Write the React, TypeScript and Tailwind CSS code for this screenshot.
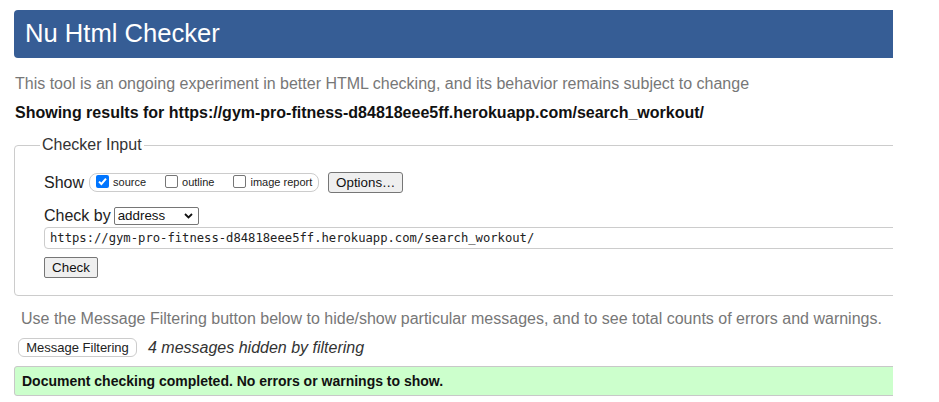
const sans = "font-['Liberation_Sans',Arial,sans-serif]";

function Box({ checked }: { checked?: boolean }) {
  if (checked) {
    return (
      <span className="mt-[1px] flex h-[13px] w-[13px] shrink-0 items-center justify-center self-start rounded-[2px] bg-[#0075ff]">
        <svg width="11" height="11" viewBox="0 0 11 11">
          <path d="M2 5.6 L4.4 8 L9 2.6" fill="none" stroke="#fff" strokeWidth="2" />
        </svg>
      </span>
    );
  }
  return (
    <span className="mt-[1px] h-[13px] w-[13px] shrink-0 self-start rounded-[2px] border border-[#767676] bg-white" />
  );
}

export default function App() {
  return (
    <div className={`min-h-screen w-[893px] overflow-hidden bg-white pt-[10px] ${sans}`}>
      <div className="w-[1100px]">
        {/* Header */}
        <header className="ml-[14px] flex h-[48px] items-center rounded-l-[4px] bg-[#365d95] pl-[11px]">
          <h1 className="text-[25.6px] leading-none text-white">Nu Html Checker</h1>
        </header>

        <p className="mt-[17px] ml-[15px] text-[16px] leading-[18px] text-[#777]">
          This tool is an ongoing experiment in better HTML checking, and its behavior remains subject to change
        </p>
        <p className="mt-[11px] ml-[15px] text-[16px] font-bold leading-[18px] text-[#111]">
          Showing results for https://gym-pro-fitness-d84818eee5ff.herokuapp.com/search_workout/
        </p>

        {/* Checker input */}
        <fieldset className="mt-[14px] ml-[14px] rounded-[4px] border border-[#ccc] pr-0 pb-[17px] pl-[29px]">
          <legend className="-ml-[4px] px-[2px] text-[16px] leading-[18px] text-[#333]">Checker Input</legend>

          <div className="mt-[18px] flex h-[21px] items-center">
            <span className="text-[16px] leading-[18px] text-[#222]">Show</span>
            <div className="ml-[5px] flex h-[19px] items-center rounded-[8px] border border-[#ccc] pl-[6px] pr-[6px]">
              <Box checked />
              <span className="ml-[4px] text-[11px] leading-[13px] text-[#222]">source</span>
              <span className="ml-[19px] flex items-center self-stretch">
                <Box />
              </span>
              <span className="ml-[4px] text-[11px] leading-[13px] text-[#222]">outline</span>
              <span className="ml-[19px] flex items-center self-stretch">
                <Box />
              </span>
              <span className="ml-[4px] text-[11px] leading-[13px] text-[#222]">image report</span>
            </div>
            <button className="ml-[9px] flex h-[21px] w-[75px] items-center justify-center rounded-[3px] border border-[#767676] bg-[#efefef] text-[13.33px] text-[#111]">
              Options…
            </button>
          </div>

          <div className="mt-[13px] flex h-[19px] items-center">
            <span className="text-[16px] leading-[18px] text-[#222]">Check by</span>
            <div className="ml-[3px] flex h-[18px] w-[85px] items-center justify-between rounded-[2px] border border-[#767676] pl-[3px] pr-[5px]">
              <span className="text-[13.33px] leading-none text-[#111]">address</span>
              <svg width="9" height="6" viewBox="0 0 9 6">
                <path d="M1 1 L4.5 4.5 L8 1" fill="none" stroke="#111" strokeWidth="1.8" />
              </svg>
            </div>
          </div>

          <div className="mt-[2px] flex h-[22px] items-center rounded-l-[4px] border border-[#ccc] pl-[5px]">
            <span className="font-['DejaVu_Sans_Mono',monospace] text-[12.2px] leading-none text-[#222]">
              https://gym-pro-fitness-d84818eee5ff.herokuapp.com/search_workout/
            </span>
          </div>

          <button className="mt-[8px] flex h-[21px] w-[54px] items-center justify-center rounded-[2px] border border-[#767676] bg-[#efefef] text-[13.33px] text-[#111]">
            Check
          </button>
        </fieldset>

        <p className="mt-[14px] ml-[21px] text-[16px] leading-[18px] text-[#777]">
          Use the Message Filtering button below to hide/show particular messages, and to see total counts of errors and warnings.
        </p>

        <div className="mt-[10px] ml-[18px] flex h-[19px] items-center">
          <button className="flex h-[19px] w-[119px] items-center justify-center rounded-[6px] border border-[#ccc] bg-white text-[13px] text-[#222]">
            Message Filtering
          </button>
          <span className="ml-[11px] text-[16px] italic leading-[18px] text-[#333]">4 messages hidden by filtering</span>
        </div>

        <div className="mt-[9px] ml-[14px] flex h-[30px] items-center rounded-l-[3px] border border-[#c8c8c8] bg-[#ccffcc] pl-[7px]">
          <span className="text-[14px] font-bold leading-none text-[#111]">
            Document checking completed. No errors or warnings to show.
          </span>
        </div>
      </div>
    </div>
  );
}
